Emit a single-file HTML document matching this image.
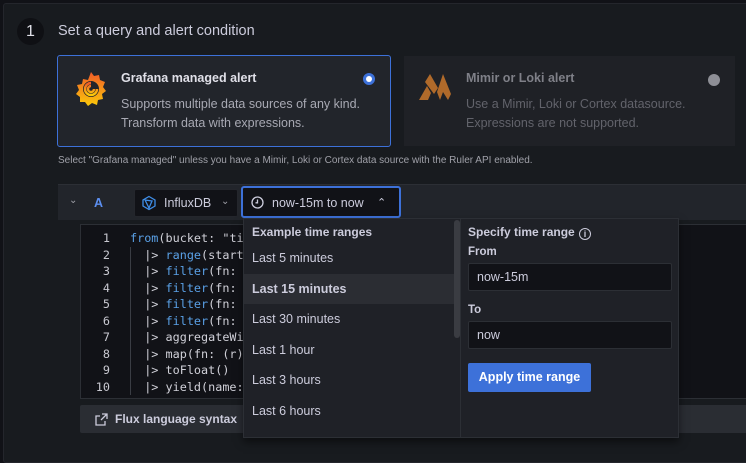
<!DOCTYPE html>
<html><head><style>
*{box-sizing:border-box;margin:0;padding:0}
body{width:746px;height:443px;overflow:hidden;background:#111217;font-family:"Liberation Sans",sans-serif;position:relative;color:#ccccdc}
.a{position:absolute}
.panel{left:3px;top:3px;width:760px;height:460px;background:#181b1f;border:1px solid #24262c;border-radius:3px}
.mono{font-family:"DejaVu Sans Mono","Liberation Mono",monospace;font-size:11.8px}
</style></head><body>
<div class="a panel"></div>
<div class="a" style="left:17px;top:18px;width:27px;height:27px;border-radius:50%;background:#0f1014;color:#e0e0e8;font-size:16px;text-align:center;line-height:27px">1</div>
<div class="a" style="left:58px;top:23px;font-size:14.5px;color:#ccccdc">Set a query and alert condition</div>

<div class="a" style="left:57px;top:55px;width:334px;height:92px;background:#22252b;border:1px solid #3d71d9;border-radius:3px"></div>
<svg class="a" style="left:73px;top:70px" width="36" height="38" viewBox="0 0 36 38"><defs><linearGradient id="g" x1="0" y1="1" x2="0" y2="0"><stop offset="0" stop-color="#fbca0a"/><stop offset="1" stop-color="#f05a28"/></linearGradient></defs><path d="M18 2l3 4 5-1 1 5 5 2-2 5 3 4-4 3 1 5-5 1-1 5-5-2-4 3-3-4-5 0 0-5-4-3 3-4-2-5 5-1 1-5 5 1z" fill="url(#g)"/><circle cx="18" cy="19" r="8" fill="#22252b"/><path d="M18 13a6 6 0 1 0 6 6M18 16a3 3 0 1 0 3 3" stroke="url(#g)" stroke-width="2.5" fill="none"/></svg>
<div class="a" style="left:121px;top:71px;font-size:12.5px;font-weight:bold;color:#e0e0e8">Grafana managed alert</div>
<div class="a" style="left:121px;top:95px;font-size:12.5px;line-height:19px;color:#a8a9b3">Supports multiple data sources of any kind.<br>Transform data with expressions.</div>
<div class="a" style="left:363px;top:73px;width:12px;height:12px;border-radius:50%;background:#3d71d9;border:3px solid #3d71d9"><div style="width:6px;height:6px;border-radius:50%;background:#fff;border:0"></div></div>

<div class="a" style="left:404px;top:56px;width:331px;height:90px;background:#1f2126"></div>
<svg class="a" style="left:417px;top:72px" width="36" height="30" viewBox="0 0 36 30"><path d="M2 28l8-14 4 7-3 7zM8 10l5-8 8 14-4 6zM20 20l6-18 8 20-3 6-5-8-3 8z" fill="#b06a2a"/></svg>
<div class="a" style="left:466px;top:71px;font-size:12.5px;font-weight:bold;color:#7f8088">Mimir or Loki alert</div>
<div class="a" style="left:466px;top:95px;font-size:12.5px;line-height:19px;color:#62636b">Use a Mimir, Loki or Cortex datasource.<br>Expressions are not supported.</div>
<div class="a" style="left:708px;top:74px;width:12px;height:12px;border-radius:50%;background:#8e8f96"></div>

<div class="a" style="left:58px;top:155px;font-size:10px;color:#9fa0a8">Select "Grafana managed" unless you have a Mimir, Loki or Cortex data source with the Ruler API enabled.</div>

<div class="a" style="left:58px;top:184px;width:700px;height:36px;background:#22252b;border-top:1px solid #2c2f35"></div>
<div class="a" style="left:69px;top:195px;font-size:10px;color:#9fa0a8">⌄</div>
<div class="a" style="left:94px;top:196px;font-size:12.5px;font-weight:bold;color:#5c8ff0">A</div>
<div class="a" style="left:134px;top:189px;width:104px;height:28px;background:#111217;border:1px solid #24262c;border-radius:2px"></div>
<svg class="a" style="left:141px;top:195px" width="16" height="16" viewBox="0 0 16 16"><path d="M8 1.5l6 3.5v6l-6 3.5-6-3.5v-6zM4 5l7 1-3 7z" stroke="#3f8ee8" stroke-width="1.3" fill="none"/></svg>
<div class="a" style="left:164px;top:196px;font-size:12.5px;color:#ccccdc">InfluxDB</div>
<div class="a" style="left:221px;top:196px;font-size:10px;color:#9fa0a8">⌄</div>
<div class="a" style="left:241px;top:186px;width:160px;height:32px;background:#111217;border:2px solid #3d71d9;border-radius:3px"></div>
<svg class="a" style="left:251px;top:196px" width="13" height="13" viewBox="0 0 13 13"><circle cx="6.5" cy="6.5" r="5.5" stroke="#ccccdc" stroke-width="1.3" fill="none"/><path d="M6.5 3.5v3.3h-2" stroke="#ccccdc" stroke-width="1.3" fill="none"/></svg>
<div class="a" style="left:272px;top:196px;font-size:12.5px;color:#ccccdc">now-15m to now</div>
<div class="a" style="left:377px;top:196px;font-size:11px;color:#ccccdc">⌃</div>

<div class="a" style="left:80px;top:224px;width:680px;height:175px;background:#111217;border:1px solid #2c2f35"></div>
<div class="a mono" style="left:84px;top:230px;width:26px;text-align:right;line-height:16.5px;color:#c8c8d0">1<br>2<br>3<br>4<br>5<br>6<br>7<br>8<br>9<br>10</div>
<div class="a" style="left:130px;top:247px;width:1px;height:148px;background:#3a3d44"></div>
<div class="a mono" style="left:130px;top:230px;line-height:16.5px;color:#d0d0d8;white-space:pre"><span style="color:#5aa0e6">from</span>(bucket: "ti
  |&gt; <span style="color:#5aa0e6">range</span>(start
  |&gt; <span style="color:#5aa0e6">filter</span>(fn:
  |&gt; <span style="color:#5aa0e6">filter</span>(fn:
  |&gt; <span style="color:#5aa0e6">filter</span>(fn:
  |&gt; <span style="color:#5aa0e6">filter</span>(fn:
  |&gt; aggregateWi
  |&gt; map(fn: (r)
  |&gt; toFloat()
  |&gt; yield(name:</div>
<div class="a" style="left:80px;top:405px;width:680px;height:28px;background:#2a2d33;border-radius:2px"></div>
<svg class="a" style="left:95px;top:413px" width="13" height="13" viewBox="0 0 13 13"><path d="M7 1h5v5M12 1L6 7M10 8v4H1V3h4" stroke="#ccccdc" stroke-width="1.3" fill="none"/></svg>
<div class="a" style="left:115px;top:412px;font-size:12px;font-weight:bold;color:#ccccdc">Flux language syntax</div>

<div class="a" style="left:243px;top:218px;width:436px;height:220px;background:#1f2127;border:1px solid #2c2f35;box-shadow:0 4px 8px rgba(0,0,0,.5)"></div>
<div class="a" style="left:252px;top:225px;font-size:12px;font-weight:bold;color:#ccccdc">Example time ranges</div>
<div class="a" style="left:244px;top:274px;width:210px;height:30px;background:#2b2d33"></div>
<div class="a" style="left:252px;top:243px;font-size:12.5px;line-height:30.6px;color:#ccccdc">Last 5 minutes<br><b>Last 15 minutes</b><br>Last 30 minutes<br>Last 1 hour<br>Last 3 hours<br>Last 6 hours</div>
<div class="a" style="left:454px;top:220px;width:6px;height:118px;background:#3a3c42;border-radius:3px"></div>
<div class="a" style="left:460px;top:219px;width:1px;height:218px;background:#2c2f35"></div>
<div class="a" style="left:468px;top:225px;font-size:12px;font-weight:bold;color:#ccccdc">Specify time range <span style="display:inline-block;margin-left:1px;width:12px;height:12px;border:1.3px solid #ccccdc;border-radius:50%;font-size:9px;text-align:center;line-height:10px;vertical-align:-1px">i</span></div>
<div class="a" style="left:468px;top:246px;font-size:11.5px;font-weight:bold;color:#ccccdc">From</div>
<div class="a" style="left:468px;top:263px;width:204px;height:28px;background:#111217;border:1px solid #2c2f35;border-radius:2px;padding:6px 8px;font-size:12.5px;color:#ccccdc">now-15m</div>
<div class="a" style="left:468px;top:304px;font-size:11.5px;font-weight:bold;color:#ccccdc">To</div>
<div class="a" style="left:468px;top:321px;width:204px;height:28px;background:#111217;border:1px solid #2c2f35;border-radius:2px;padding:6px 8px;font-size:12.5px;color:#ccccdc">now</div>
<div class="a" style="left:468px;top:363px;width:123px;height:29px;background:#3d71d9;border-radius:2px;font-size:12.5px;font-weight:bold;color:#fff;text-align:center;line-height:29px">Apply time range</div>
</body></html>
